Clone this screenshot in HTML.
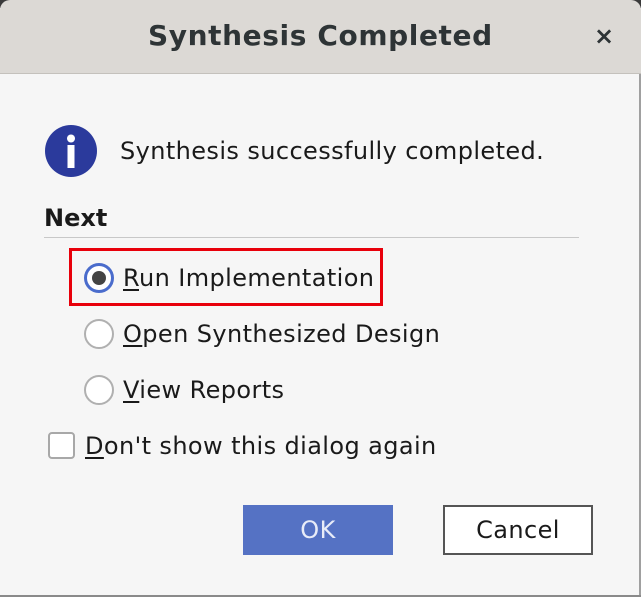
<!DOCTYPE html>
<html><head><meta charset="utf-8"><style>
*{margin:0;padding:0;box-sizing:border-box}
body{width:641px;height:597px;overflow:hidden;background:#f6f6f6;font-family:"DejaVu Sans","Liberation Sans",sans-serif;position:relative;color:#1a1a1a}
.a{position:absolute;white-space:nowrap}
#tb{position:absolute;left:0;top:0;width:641px;height:74px;background:#dcd9d5;border-bottom:1px solid #c4c1bc;border-radius:10px 10px 0 0}
.t{font-size:24px;line-height:28px;letter-spacing:0.4px}
u{text-decoration:underline;text-underline-offset:3px}
.r{position:absolute;width:30px;height:30px;border-radius:50%;border:2px solid #b0b0b0;background:#fff}
</style></head><body>
<div style="position:absolute;left:0;top:0;width:641px;height:8px;background:#3a3a3a"></div>
<div id="tb"></div>
<div class="a" style="left:148px;top:19px;font-size:28px;letter-spacing:0.6px;font-weight:bold;color:#2e3436">Synthesis Completed</div>
<div class="a" style="left:594px;top:22px;font-size:24px;font-weight:bold;color:#2e3436">×</div>
<div style="position:absolute;right:0;top:74px;width:2px;height:523px;background:#a0a0a0"></div>
<div style="position:absolute;left:0;bottom:0;width:641px;height:2px;background:#8a8a8a"></div>
<svg class="a" style="left:45px;top:125px" width="52" height="52" viewBox="0 0 52 52"><circle cx="26" cy="26" r="26" fill="#2b3a9c"/><circle cx="26" cy="13.5" r="4" fill="#fff"/><rect x="22.5" y="20" width="7" height="23" fill="#fff"/></svg>
<div class="a t" style="left:120px;top:137px">Synthesis successfully completed.</div>
<div class="a t" style="left:44px;top:204px;font-weight:bold;letter-spacing:0">Next</div>
<div style="position:absolute;left:44px;top:237px;width:535px;height:1px;background:#c8c8c8"></div>
<div style="position:absolute;left:69px;top:248px;width:314px;height:58px;border:3px solid #e8000b"></div>
<div class="r" style="left:84px;top:263px;border-color:#4a6ccc;border-width:3px"><div style="position:absolute;left:5px;top:5px;width:14px;height:14px;border-radius:50%;background:#444"></div></div>
<div class="a t" style="left:123px;top:264px"><u>R</u>un Implementation</div>
<div class="r" style="left:84px;top:319px"></div>
<div class="a t" style="left:123px;top:320px"><u>O</u>pen Synthesized Design</div>
<div class="r" style="left:84px;top:375px"></div>
<div class="a t" style="left:123px;top:376px"><u>V</u>iew Reports</div>
<div style="position:absolute;left:48px;top:432px;width:27px;height:27px;border:2px solid #a8a8a8;border-radius:4px;background:#fff"></div>
<div class="a t" style="left:85px;top:432px"><u>D</u>on't show this dialog again</div>
<div class="a t" style="left:243px;top:505px;width:150px;height:50px;background:#5572c4;color:#e8ecf8;text-align:center;line-height:50px">OK</div>
<div class="a t" style="left:443px;top:505px;width:150px;height:50px;background:#fff;border:2px solid #555;text-align:center;line-height:46px">Cancel</div>
</body></html>
